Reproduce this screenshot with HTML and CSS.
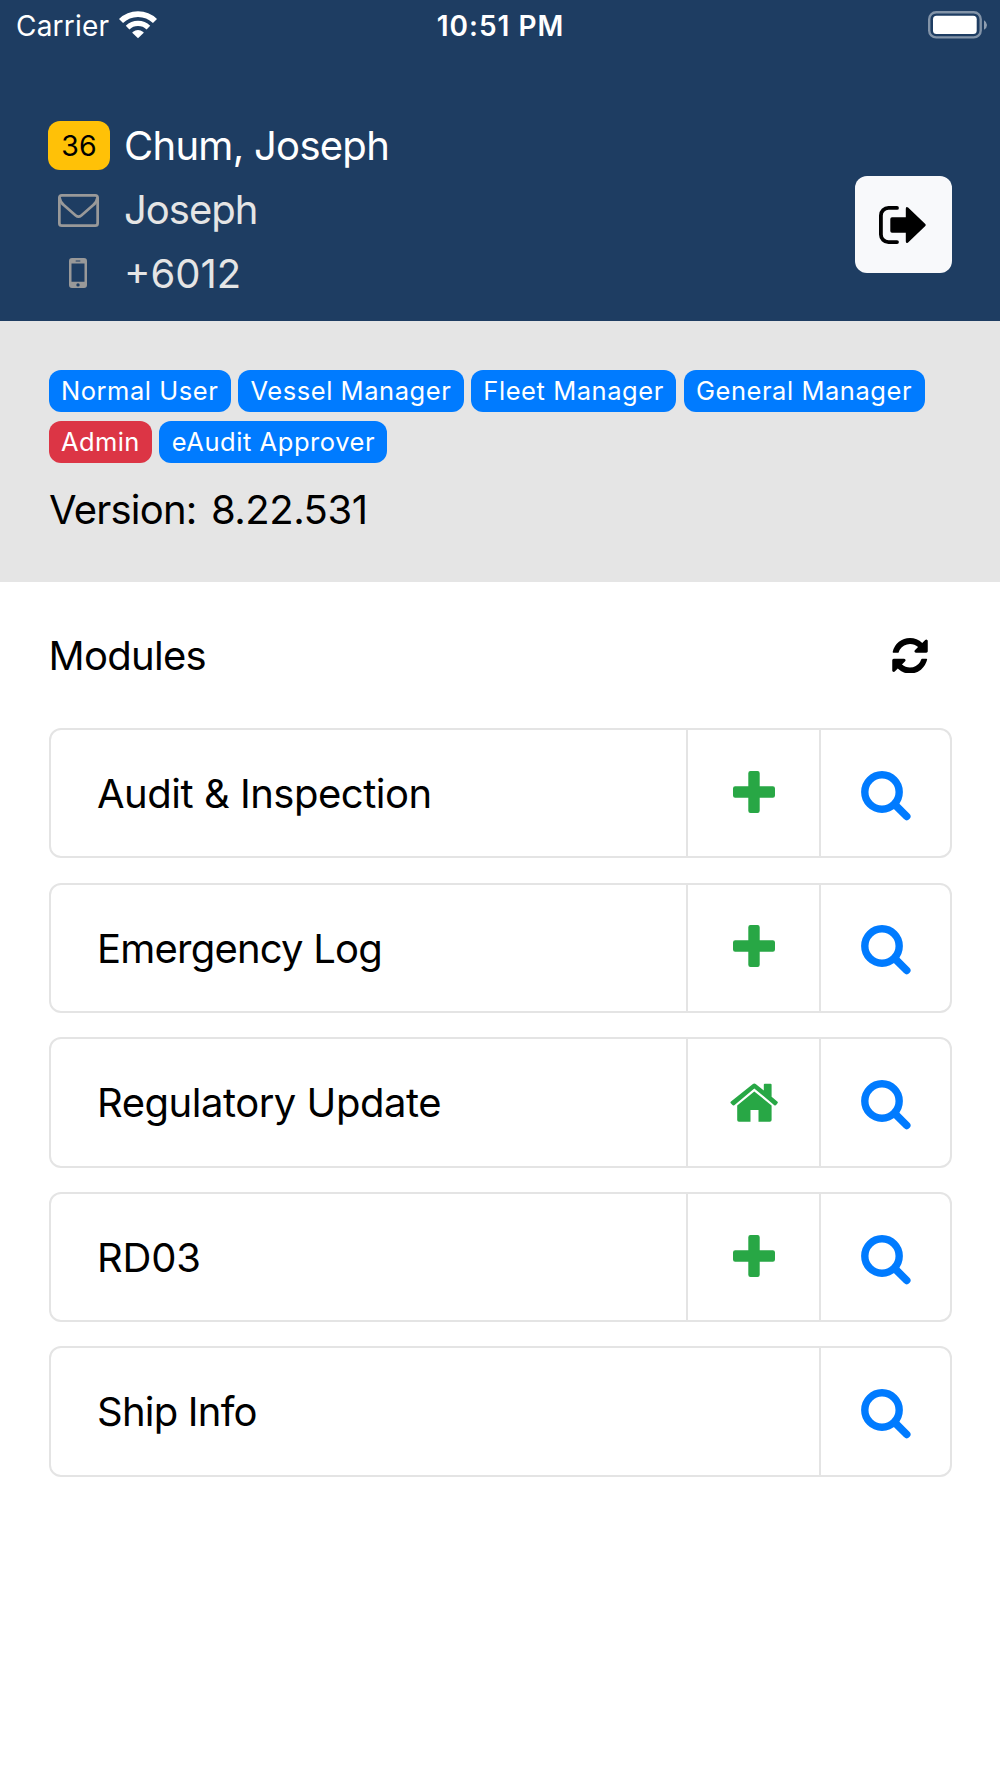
FILE: index.html
```html
<!DOCTYPE html>
<html lang="en">
<head>
<meta charset="utf-8">
<title>Modules</title>
<link rel="stylesheet" href="styles.css">
</head>
<body>
<svg class="defs" aria-hidden="true">
  <symbol id="plus" viewBox="0 0 42 42"><path d="M17.5 0h7a2.200 2.200 0 0 1 2.200 2.200v13.100h13.100a2.200 2.200 0 0 1 2.200 2.200v7a2.200 2.200 0 0 1-2.200 2.200H26.700v13.100a2.200 2.200 0 0 1-2.200 2.200h-7a2.200 2.200 0 0 1-2.200-2.200V26.700H2.200A2.200 2.200 0 0 1 0 24.500v-7a2.200 2.200 0 0 1 2.200-2.200h13.100V2.200A2.200 2.200 0 0 1 17.500 0z" fill="currentColor"/></symbol>
  <symbol id="search" viewBox="0 0 50 50"><g fill="none" stroke="currentColor"><circle cx="21" cy="21" r="17.200" stroke-width="7.400"/><path d="M34 33.700L45.700 45.400" stroke-width="7.600" stroke-linecap="round"/></g></symbol>
  <symbol id="home" viewBox="0 0 48 39"><g fill="currentColor"><path d="M24.300 8.500L7.200 22.400V37a1.800 1.800 0 0 0 1.800 1.800h11.500V27h8v11.800h11.300a1.800 1.800 0 0 0 1.800-1.800V22.400z"/><path d="M22.600 1.200Q24.300-.2 26 1.200L33.800 7.500V1.700q0-1 1-1h5.800q1 0 1 1v12.100l5.700 4.700q1 .8.200 1.800l-1.400 1.800q-.8.900-1.800.1L24.300 5.400 4.300 22.200q-1 .8-1.800-.1L.8 20.300q-.8-1 .2-1.800z"/></g></symbol>
</svg>

<header class="header">
  <div class="status">
    <div class="carrier">Carrier
      <svg class="wifi" viewBox="0 0 38 28"><g fill="none" stroke="#fff"><path d="M2 10A24.300 24.300 0 0 1 36 10" stroke-width="5.800"/><path d="M8.600 16.700A14.900 14.900 0 0 1 29.400 16.700" stroke-width="5.200"/></g><path d="M19 27.300L13.500 22.100Q13 21.500 13.700 20.900Q19 17 24.300 20.900Q25 21.500 24.500 22.100z" fill="#fff"/></svg>
    </div>
    <div class="time">10:51 PM</div>
    <svg class="battery" viewBox="0 0 60 28"><rect x="1.200" y="1.200" width="51.500" height="25.200" rx="7" fill="none" stroke="#fff" stroke-opacity=".45" stroke-width="2.400"/><rect x="5" y="4.700" width="43.700" height="18.200" rx="3.500" fill="#fff"/><path d="M56 9.200Q59 11 59 14T56 18.800z" fill="#fff" fill-opacity=".5"/></svg>
  </div>
  <div class="profile">
    <div class="contact">
      <div class="line name"><span class="lead"><span class="badge">36</span></span><span class="value">Chum, Joseph</span></div>
      <div class="line user"><span class="lead"><svg class="mail" viewBox="0 0 41 33"><g fill="none" stroke="#999" stroke-width="2.700"><rect x="1.350" y="1.350" width="38.300" height="30.300" rx="2.500"/><path d="M1.500 3.500Q2 8 6 11.300L17.700 21.500Q20.500 23.900 23.300 21.500L35 11.300Q39 8 39.500 3.500"/></g></svg></span><span class="value">Joseph</span></div>
      <div class="line phone-no"><span class="lead"><svg class="phone" viewBox="0 0 18 30"><path fill="#999" fill-rule="evenodd" d="M3 0h12a3 3 0 0 1 3 3v24a3 3 0 0 1-3 3H3a3 3 0 0 1-3-3V3A3 3 0 0 1 3 0zM2.500 5.500v18.300h13V5.500zM6.700 2.500v1h4.600v-1zM9 25.200a1.700 1.700 0 1 0 0 3.400 1.700 1.700 0 0 0 0-3.400z"/></svg></span><span class="value">+6012</span></div>
    </div>
    <button class="logout" aria-label="Log out">
      <svg viewBox="0 0 48 38"><path d="M18 1.900H9.500A7.600 7.600 0 0 0 1.900 9.500v19a7.600 7.600 0 0 0 7.600 7.600H18" fill="none" stroke="#000" stroke-width="3.800" stroke-linecap="round"/><path d="M13 11.300h13.800V2.800q0-2.700 2.300-1.200L46.300 18q1 1 0 2L29.100 36.400q-2.300 1.500-2.300-1.200V26.700H13a1.700 1.700 0 0 1-1.700-1.700V13a1.700 1.700 0 0 1 1.700-1.700z"/></svg>
    </button>
  </div>
</header>

<section class="info">
  <div class="roles">
    <span class="role">Normal User</span><span class="role">Vessel Manager</span><span class="role">Fleet Manager</span><span class="role">General Manager</span><span class="role admin">Admin</span><span class="role">eAudit Approver</span>
  </div>
  <div class="version"><span>Version:</span><span class="number">8.22.531</span></div>
</section>

<main class="modules">
  <div class="heading">
    <span>Modules</span>
    <svg class="refresh" viewBox="0 128 1536 1536"><path d="M1511 1056q0 5-1 7-64 268-268 434.500t-478 166.500q-146 0-282.500-55t-243.500-157l-129 129q-19 19-45 19t-45-19-19-45v-448q0-26 19-45t45-19h448q26 0 45 19t19 45-19 45l-137 137q71 66 161 102t187 36q134 0 250-65t186-179q11-17 53-117 8-23 30-23h192q13 0 22.500 9.500t9.500 22.500zm25-800v448q0 26-19 45t-45 19h-448q-26 0-45-19t-19-45 19-45l138-138q-148-137-349-137-134 0-250 65t-186 179q-11 17-53 117-8 23-30 23h-199q-13 0-22.500-9.500t-9.500-22.500v-7q65-268 270-434.500t480-166.500q146 0 284 55.500t245 156.500l130-129q19-19 45-19t45 19 19 45z"/></svg>
  </div>
  <div class="list">
    <div class="row"><div class="label">Audit &amp; Inspection</div><div class="cell action"><svg class="plus"><use href="#plus"/></svg></div><div class="cell find"><svg class="search"><use href="#search"/></svg></div></div>
    <div class="row"><div class="label tight">Emergency Log</div><div class="cell action"><svg class="plus"><use href="#plus"/></svg></div><div class="cell find"><svg class="search"><use href="#search"/></svg></div></div>
    <div class="row"><div class="label">Regulatory Update</div><div class="cell action"><svg class="home"><use href="#home"/></svg></div><div class="cell find"><svg class="search"><use href="#search"/></svg></div></div>
    <div class="row"><div class="label code">RD03</div><div class="cell action"><svg class="plus"><use href="#plus"/></svg></div><div class="cell find"><svg class="search"><use href="#search"/></svg></div></div>
    <div class="row"><div class="label tight">Ship Info</div><div class="cell find"><svg class="search"><use href="#search"/></svg></div></div>
  </div>
</main>
</body>
</html>
```
FILE: styles.css
```css
* { box-sizing: border-box; }
body {
  margin: 0;
  min-height: 1778px;
  background: #fff;
  color: #000;
  font: 40px/50px "Inter", sans-serif;
  letter-spacing: -0.48px;
}
svg { display: block; flex: none; }
.defs { width: 0; height: 0; position: absolute; }

.header { height: 321px; background: #1e3d62; color: #fff; }
.status {
  display: grid;
  grid-template-columns: 1fr auto 1fr;
  align-items: center;
  height: 51px;
  padding: 0 12px 0 16px;
  font-size: 28px;
}
.carrier { display: flex; align-items: center; gap: 10px; letter-spacing: 0.2px; }
.wifi { width: 38px; height: 28px; margin-bottom: 2px; }
.time { padding-right: 3px; font-weight: 600; letter-spacing: 1px; }
.battery { width: 60px; height: 28px; justify-self: end; margin-bottom: 2px; }

.profile {
  display: flex;
  justify-content: space-between;
  padding: 62.600px 48.300px 0;
}
.line { display: flex; align-items: center; height: 63.800px; color: #e5e5e5; }
.lead { display: flex; justify-content: center; width: 61.500px; margin-right: 14.200px; }
.value { padding-top: 2px; }
.name { color: #fff; letter-spacing: -0.72px; }
.user { letter-spacing: -1px; }
.phone-no { letter-spacing: 0; }
.badge {
  width: 61.500px;
  height: 49px;
  border-radius: 12px;
  background: #ffc107;
  color: #000;
  font-size: 28.500px;
  line-height: 49px;
  text-align: center;
  letter-spacing: 0.2px;
}
.mail { width: 41px; height: 33px; margin: 3px 2px 0 0; }
.phone { width: 18px; height: 30px; margin-right: 2px; }
.logout {
  display: flex;
  align-items: center;
  justify-content: center;
  width: 97px;
  height: 97px;
  margin-top: 62.800px;
  padding: 0;
  border: 0;
  border-radius: 12px;
  background: #f8f9fb;
}
.logout svg { width: 48px; height: 38px; margin: 1px 0 0 0; }

.info {
  height: 261px;
  padding: 48.500px 48.500px 0;
  background: #e5e5e5;
}
.roles { display: flex; flex-wrap: wrap; gap: 9.300px 7.300px; }
.role {
  height: 42.300px;
  padding: 0 12.400px;
  border-radius: 12px;
  background: #007bff;
  color: #fff;
  font-size: 25.500px;
  line-height: 42.300px;
  letter-spacing: 0.55px;
  white-space: nowrap;
}
.role.admin { background: #dc3545; letter-spacing: 0.4px; }
.version { display: flex; margin-top: 21.500px; padding-left: 0.500px; letter-spacing: -0.8px; }
.version .number { margin-left: 14.500px; letter-spacing: -0.5px; }

.modules { padding: 48.700px 48.500px 0; }
.heading {
  display: flex;
  align-items: center;
  justify-content: space-between;
  padding-right: 24px;
  letter-spacing: -0.7px;
}
.refresh { width: 36px; height: 35.500px; }
.list { display: flex; flex-direction: column; gap: 24.300px; margin-top: 47.400px; }
.row {
  display: flex;
  height: 130.300px;
  border: 2px solid #e4e4e4;
  border-radius: 12px;
}
.label { flex: 1; padding-left: 46.500px; line-height: 128px; }
.label.tight { letter-spacing: -0.78px; }
.label.code { letter-spacing: -0.2px; }
.cell {
  display: flex;
  align-items: center;
  justify-content: center;
  border-left: 2px solid #e4e4e4;
}
.action { width: 133px; color: #28a745; }
.find { width: 130.500px; color: #007bff; }
.plus { width: 42px; height: 42px; margin-bottom: 3px; }
.home { width: 48px; height: 39px; margin-top: 1px; }
.search { width: 50px; height: 50px; margin: 5px 0 0 2px; }
```
